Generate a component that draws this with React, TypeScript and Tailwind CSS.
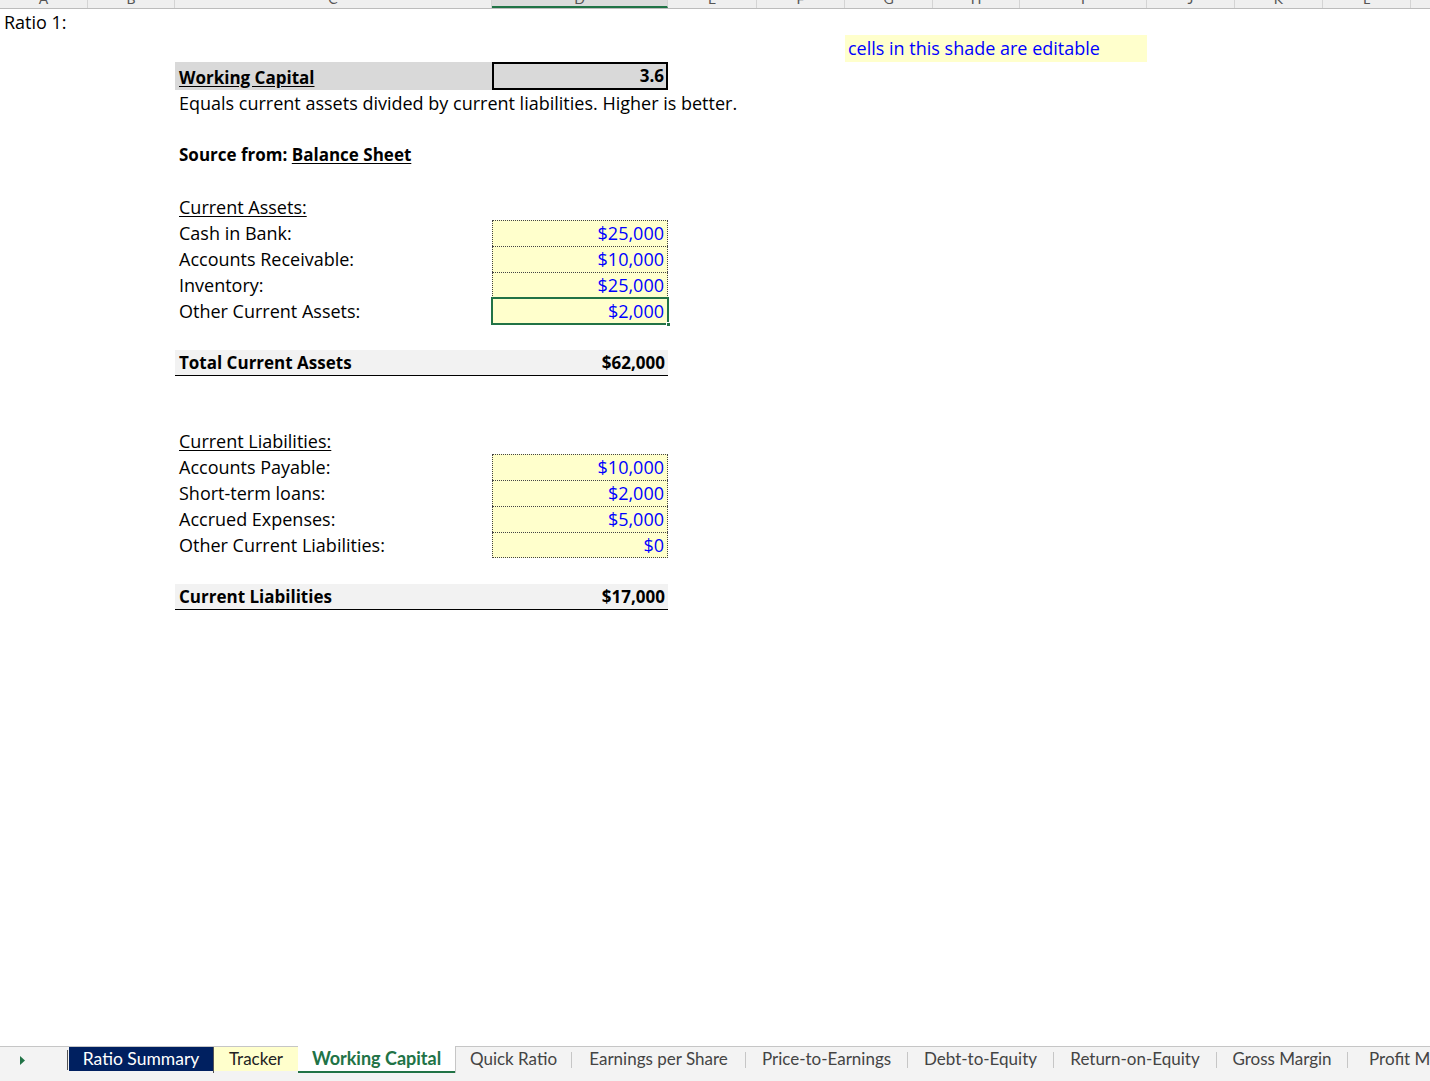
import React from 'react';

const SHEET_FONT = { fontFamily: '"Open Sans", Lato, sans-serif' };
const TAB_FONT = { fontFamily: 'Lato, "Open Sans", sans-serif' };

const cols = [
  { l: 'A', w: 88 },
  { l: 'B', w: 87 },
  { l: 'C', w: 317 },
  { l: 'D', w: 176, sel: true },
  { l: 'E', w: 89 },
  { l: 'F', w: 88 },
  { l: 'G', w: 88 },
  { l: 'H', w: 87 },
  { l: 'I', w: 127 },
  { l: 'J', w: 88 },
  { l: 'K', w: 88 },
  { l: 'L', w: 88 },
  { l: 'M', w: 80 },
];

const tabs = [
  { name: 'Quick Ratio', w: 115 },
  { name: 'Earnings per Share', w: 173 },
  { name: 'Price-to-Earnings', w: 161 },
  { name: 'Debt-to-Equity', w: 145 },
  { name: 'Return-on-Equity', w: 162 },
  { name: 'Gross Margin', w: 130 },
  { name: 'Profit Margin', w: 140 },
];

const assets = [
  ['Cash in Bank:', '$25,000'],
  ['Accounts Receivable:', '$10,000'],
  ['Inventory:', '$25,000'],
  ['Other Current Assets:', '$2,000'],
];

const liabilities = [
  ['Accounts Payable:', '$10,000'],
  ['Short-term loans:', '$2,000'],
  ['Accrued Expenses:', '$5,000'],
  ['Other Current Liabilities:', '$0'],
];

function Row({ children, h = 'h-[26px]' }: { children?: React.ReactNode; h?: string }) {
  return <div className={`flex ${h} items-stretch shrink-0`}>{children}</div>;
}

function InputRow({ label, value, selected, last }: { label: string; value: string; selected?: boolean; last?: boolean }) {
  return (
    <Row>
      <div className="w-[175px] shrink-0" />
      <div className="w-[317px] shrink-0 flex items-center pl-1 text-[18px] text-black">{label}</div>
      <div className="w-[176px] shrink-0 relative bg-[#ffffcc]">
        <div
          className={`absolute inset-0 flex items-center justify-end pr-[3px] text-[18px] text-[#0000ff] border-l border-r border-t border-dotted border-[#444] ${last ? 'border-b' : ''}`}
        >
          {value}
        </div>
        {selected && (
          <>
            <div className="absolute -inset-px border-2 border-[#217346]" />
            <div className="absolute -right-[3px] -bottom-[3px] w-[5px] h-[5px] bg-[#217346] border border-white" />
          </>
        )}
      </div>
    </Row>
  );
}

function TotalRow({ label, value }: { label: string; value: string }) {
  return (
    <Row>
      <div className="w-[175px] shrink-0" />
      <div className="w-[493px] shrink-0 flex items-center justify-between bg-[#f2f2f2] border-b border-black px-1 pr-[3px] text-[17px] font-bold text-black">
        <span>{label}</span>
        <span>{value}</span>
      </div>
    </Row>
  );
}

export default function App() {
  return (
    <div className="w-[1430px] h-[1081px] bg-white overflow-hidden flex flex-col" style={SHEET_FONT}>
      {/* column headers */}
      <div className="flex h-[9px] bg-[#efefef] border-b border-[#bcbcbc] overflow-hidden shrink-0">
        {cols.map((c) => (
          <div
            key={c.l}
            className={`shrink-0 relative border-r border-[#d4d4d4] flex justify-center ${c.sel ? 'bg-[#dcdcdc] border-b-2 border-b-[#217346]' : ''}`}
            style={{ width: c.w }}
          >
            <span className="text-[14px] leading-none text-[#555] -mt-[8px]" style={TAB_FONT}>{c.l}</span>
          </div>
        ))}
      </div>

      {/* sheet */}
      <div className="flex-1 flex flex-col">
        <Row>
          <div className="pl-1 flex items-center text-[18px] text-black">Ratio 1:</div>
        </Row>
        <Row h="h-[27px]">
          <div className="w-[845px] shrink-0" />
          <div className="w-[302px] shrink-0 bg-[#ffffcc] flex items-center pl-[3px] text-[18px] text-[#0000ff]">
            cells in this shade are editable
          </div>
        </Row>
        <Row h="h-[28px]">
          <div className="w-[175px] shrink-0" />
          <div className="w-[317px] shrink-0 bg-[#d9d9d9] flex items-end pl-1 text-[17px] font-bold underline underline-offset-2 text-black">
            Working Capital
          </div>
          <div className="w-[176px] shrink-0 bg-[#d9d9d9] border-2 border-black flex items-end justify-end pr-[2px] text-[17px] font-bold text-black">
            3.6
          </div>
        </Row>
        <Row>
          <div className="w-[175px] shrink-0" />
          <div className="flex items-center pl-1 text-[18px] text-black whitespace-nowrap">
            Equals current assets divided by current liabilities. Higher is better.
          </div>
        </Row>
        <Row />
        <Row>
          <div className="w-[175px] shrink-0" />
          <div className="flex items-center pl-1 text-[17px] font-bold text-black">
            Source from:&nbsp;<span className="underline underline-offset-2">Balance Sheet</span>
          </div>
        </Row>
        <Row />
        <Row>
          <div className="w-[175px] shrink-0" />
          <div className="flex items-center pl-1 text-[18px] text-black underline underline-offset-2">Current Assets:</div>
        </Row>
        {assets.map(([l, v], i) => (
          <InputRow key={l} label={l} value={v} selected={i === 3} last={i === 3} />
        ))}
        <Row />
        <TotalRow label="Total Current Assets" value="$62,000" />
        <Row />
        <Row />
        <Row>
          <div className="w-[175px] shrink-0" />
          <div className="flex items-center pl-1 text-[18px] text-black underline underline-offset-2">Current Liabilities:</div>
        </Row>
        {liabilities.map(([l, v], i) => (
          <InputRow key={l} label={l} value={v} last={i === 3} />
        ))}
        <Row />
        <TotalRow label="Current Liabilities" value="$17,000" />
      </div>

      {/* sheet tabs */}
      <div className="shrink-0 h-[35px] bg-[#f3f3f3] flex flex-col overflow-hidden" style={TAB_FONT}>
        <div className="h-[27px] border-t border-[#c6c6c6] flex items-stretch text-[17px] whitespace-nowrap">
          <div className="w-[67px] shrink-0 flex items-center pl-[19px]">
            <svg width="7" height="11" viewBox="0 0 7 11">
              <path d="M1 1 L6 5.5 L1 10 Z" fill="#217346" />
            </svg>
          </div>
          <div className="w-px shrink-0 bg-[#555] my-[3px]" />
          <div className="w-[144px] shrink-0 ml-px bg-[#002060] text-white text-[17.5px] flex items-center justify-center mb-[2px]">Ratio Summary</div>
          <div className="w-px shrink-0 bg-[#555]" />
          <div className="w-[84px] shrink-0 bg-[#ffffcc] text-[#222] flex items-center justify-center mb-[2px]">Tracker</div>
          <div className="w-[157px] shrink-0 bg-white text-[#217346] text-[18px] font-bold flex items-center justify-center border-b-2 border-[#217346] -mt-px">
            Working Capital
          </div>
          <div className="w-px shrink-0 bg-[#c6c6c6] -mt-px" />
          {tabs.map((t, i) => (
            <div key={t.name} className="flex items-stretch shrink-0">
              <div className="shrink-0 flex items-center justify-center text-[#444] mb-[2px]" style={{ width: t.w }}>
                {t.name}
              </div>
              {i < tabs.length - 1 && <div className="w-px shrink-0 bg-[#c6c6c6] my-[5px]" />}
            </div>
          ))}
        </div>
        <div className="flex-1 bg-[#f3f3f3]" />
      </div>
    </div>
  );
}
